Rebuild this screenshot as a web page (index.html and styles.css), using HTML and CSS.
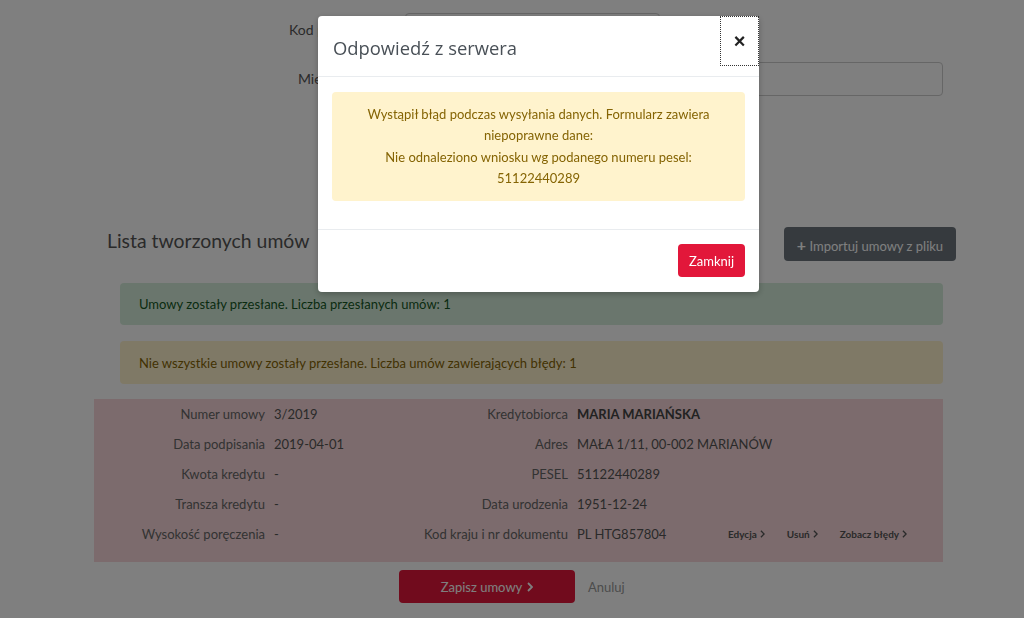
FILE: index.html
```html
<!DOCTYPE html>
<html lang="pl">
<head>
<meta charset="utf-8">
<title>Lista tworzonych umów</title>
<link rel="stylesheet" href="styles.css">
</head>
<body>
<div class="page">
  <form class="form">
    <div class="form-row">
      <label class="form-label">Kod pocztowy</label>
      <input class="input input-short" type="text">
    </div>
    <div class="form-row">
      <label class="form-label">Miejscowość</label>
      <input class="input input-long" type="text">
    </div>
  </form>

  <section class="list">
    <div class="list-head">
      <h2 class="list-title">Lista tworzonych umów</h2>
      <button class="btn btn-secondary" type="button"><span class="plus">+</span> Importuj umowy z pliku</button>
    </div>
    <div class="alert alert-success">Umowy zostały przesłane. Liczba przesłanych umów: 1</div>
    <div class="alert alert-warning">Nie wszystkie umowy zostały przesłane. Liczba umów zawierających błędy: 1</div>

    <div class="card">
      <div class="row">
        <span class="lbl">Numer umowy</span><span class="val">3/2019</span>
        <span class="lbl">Kredytobiorca</span><span class="val strong">MARIA MARIAŃSKA</span>
      </div>
      <div class="row">
        <span class="lbl">Data podpisania</span><span class="val">2019-04-01</span>
        <span class="lbl">Adres</span><span class="val">MAŁA 1/11, 00-002 MARIANÓW</span>
      </div>
      <div class="row">
        <span class="lbl">Kwota kredytu</span><span class="val">-</span>
        <span class="lbl">PESEL</span><span class="val">51122440289</span>
      </div>
      <div class="row">
        <span class="lbl">Transza kredytu</span><span class="val">-</span>
        <span class="lbl">Data urodzenia</span><span class="val">1951-12-24</span>
      </div>
      <div class="row">
        <span class="lbl">Wysokość poręczenia</span><span class="val">-</span>
        <span class="lbl">Kod kraju i nr dokumentu</span><span class="val">PL HTG857804</span>
        <span class="actions">
          <a class="act" href="#">Edycja <svg class="chev" viewBox="0 0 6 10"><path d="M1 1l4 4-4 4"/></svg></a>
          <a class="act" href="#">Usuń <svg class="chev" viewBox="0 0 6 10"><path d="M1 1l4 4-4 4"/></svg></a>
          <a class="act" href="#">Zobacz błędy <svg class="chev" viewBox="0 0 6 10"><path d="M1 1l4 4-4 4"/></svg></a>
        </span>
      </div>
    </div>

    <div class="bottom">
      <button class="btn btn-red btn-save" type="button">Zapisz umowy <svg class="chev chev-lg" viewBox="0 0 6 10"><path d="M1 1l4 4-4 4"/></svg></button>
      <a class="cancel" href="#">Anuluj</a>
    </div>
  </section>
</div>

<div class="backdrop"></div>

<div class="modal">
  <div class="modal-header">
    <h3 class="modal-title">Odpowiedź z serwera</h3>
    <button class="close" type="button">×</button>
  </div>
  <div class="modal-body">
    <div class="modal-alert">
      Wystąpił błąd podczas wysyłania danych. Formularz zawiera niepoprawne dane:<br>
      Nie odnaleziono wniosku wg podanego numeru pesel: 51122440289
    </div>
  </div>
  <div class="modal-footer">
    <button class="btn btn-red" type="button">Zamknij</button>
  </div>
</div>
</body>
</html>
```

FILE: styles.css
```css
* { box-sizing: border-box; }
html, body { margin: 0; padding: 0; }
body {
  font-family: Lato, "Open Sans", "Liberation Sans", sans-serif;
  font-size: 13px;
  color: #555;
  background: #fff;
  width: 1024px;
  height: 618px;
  overflow: hidden;
}

.page { padding-top: 13px; }

.form { display: flex; flex-direction: column; gap: 15px; }
.form-row { display: flex; align-items: center; gap: 28px; }
.form-label {
  width: 377px;
  text-align: right;
  font-size: 14px;
  color: #555;
  padding-bottom: 2px;
}
.input {
  height: 34px;
  border: 1px solid #ccc;
  border-radius: 4px;
  background: #fff;
}
.input-short { width: 255px; }
.input-long { width: 538px; }

.list { margin: 131px 0 0 94px; width: 862px; }
.list-head {
  display: flex;
  justify-content: space-between;
  align-items: center;
  height: 34px;
}
.list-title {
  margin: 0 0 7px 13px;
  font-weight: 400;
  font-size: 19.4px;
  color: #555;
}

.btn {
  border: 0;
  border-radius: 4px;
  font-family: inherit;
  font-size: 13px;
  color: #fff;
  cursor: pointer;
}
.btn-secondary {
  background: #6c757d;
  height: 34px;
  width: 172px;
  padding: 0;
}
.plus { font-weight: 700; font-size: 16px; }

.alert {
  margin-left: 26px;
  width: 823px;
  border-radius: 4px;
  padding: 0 19px;
  display: flex;
  align-items: center;
  font-size: 13px;
}
.alert-success {
  margin-top: 22px;
  height: 42px;
  background: #d4edda;
  color: #155724;
}
.alert-warning {
  margin-top: 16px;
  height: 43px;
  background: #fff3cd;
  color: #856404;
}

.card {
  margin-top: 15px;
  width: 849px;
  background: #f8d7da;
  padding-bottom: 13px;
}
.row {
  display: grid;
  grid-template-columns: 171px 100px 185px 140px auto;
  column-gap: 9px;
  height: 30px;
  align-items: center;
}
.lbl { text-align: right; color: #666; white-space: nowrap; }
.val { color: #555; white-space: nowrap; }
.strong { font-weight: 700; color: #444; }
.actions { display: flex; gap: 22px; margin-left: 2px; }
.act {
  font-size: 10px;
  font-weight: 700;
  color: #555;
  text-decoration: none;
  display: inline-flex;
  align-items: center;
  gap: 3px;
}
.chev { width: 5px; height: 8px; fill: none; stroke: currentColor; stroke-width: 1.6; }
.chev-lg { width: 6px; height: 10px; stroke-width: 1.8; }

.bottom {
  margin: 8px 0 0 305px;
  display: flex;
  align-items: center;
  gap: 13px;
}
.btn-red { background: #e2173a; }
.btn-save {
  width: 176px;
  height: 33px;
  display: inline-flex;
  align-items: center;
  justify-content: center;
  gap: 5px;
}
.cancel { color: #999; text-decoration: none; font-size: 13px; }

.backdrop {
  position: fixed;
  inset: 0;
  background: rgba(0, 0, 0, 0.5);
}

.modal {
  position: fixed;
  left: 318px;
  top: 16px;
  width: 441px;
  background: #fff;
  border-radius: 4px;
  box-shadow: 0 2px 6px rgba(0,0,0,0.25);
}
.modal-header {
  height: 61px;
  border-bottom: 1px solid #e9ecef;
  display: flex;
  justify-content: space-between;
  align-items: flex-start;
}
.modal-title {
  margin: 19px 0 0 15px;
  font-family: "Open Sans", Lato, sans-serif;
  font-weight: 400;
  font-size: 18.4px;
  color: #495057;
}
.close {
  width: 39px;
  height: 50px;
  border: 1px dotted #333;
  background: transparent;
  font-size: 20px;
  font-weight: 700;
  color: #222;
  padding: 0 0 1px;
  font-family: "Liberation Sans", sans-serif;
  line-height: 1;
}
.modal-body { padding: 15px 14px 28px; }
.modal-alert {
  background: #fff3cd;
  color: #856404;
  border-radius: 4px;
  text-align: center;
  padding: 12px 28px;
  line-height: 21.3px;
  font-size: 13px;
}
.modal-footer {
  border-top: 1px solid #e9ecef;
  padding: 14px 14px 15px;
  display: flex;
  justify-content: flex-end;
}
.modal-footer .btn-red { width: 67px; height: 33px; padding: 0; }
```
